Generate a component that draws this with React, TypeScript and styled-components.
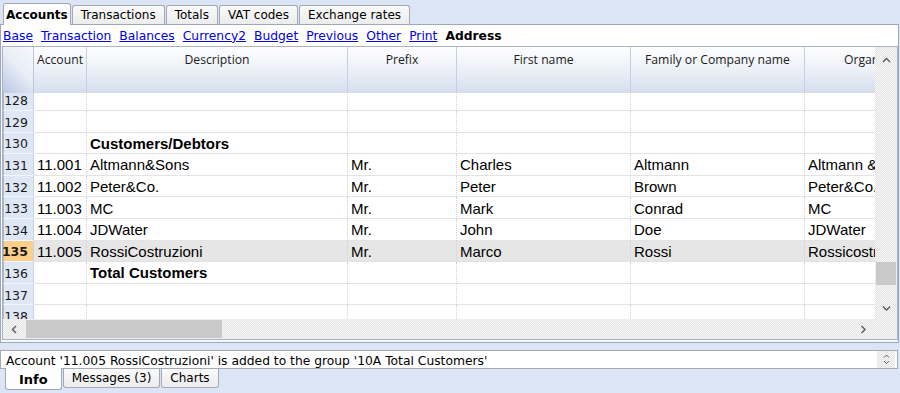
import React from "react";
import styled, {createGlobalStyle, css} from "styled-components";

const UI = `"DejaVu Sans", Tahoma, Verdana, sans-serif`;
const CELL = `"Liberation Sans", Arial, sans-serif`;
const HEAD = `"Open Sans", "Segoe UI", sans-serif`;

const COLS = "31px 53px 261px 109px 174px 174px 148px";

const GlobalStyle = createGlobalStyle`
    html, body {
        margin: 0;
        padding: 0;
    }
    body {
        width: 900px;
        height: 393px;
        overflow: hidden;
        background: #dbe5f6;
    }
`;

const checker = css`
    background-color: #efefef;
    background-image: repeating-conic-gradient(#e2e2e2 0 25%, #f8f8f8 0 50%);
    background-size: 2px 2px;
`;

interface Row {
    n: number;
    cells: string[];
    bold?: boolean;
    selected?: boolean;
}

const rows: Row[] = [
    {n: 128, cells: []},
    {n: 129, cells: []},
    {n: 130, cells: ["", "Customers/Debtors"], bold: true},
    {n: 131, cells: ["11.001", "Altmann&Sons", "Mr.", "Charles", "Altmann", "Altmann & Sons"]},
    {n: 132, cells: ["11.002", "Peter&Co.", "Mr.", "Peter", "Brown", "Peter&Co."]},
    {n: 133, cells: ["11.003", "MC", "Mr.", "Mark", "Conrad", "MC"]},
    {n: 134, cells: ["11.004", "JDWater", "Mr.", "John", "Doe", "JDWater"]},
    {n: 135, cells: ["11.005", "RossiCostruzioni", "Mr.", "Marco", "Rossi", "Rossicostruzioni"], selected: true},
    {n: 136, cells: ["", "Total Customers"], bold: true},
    {n: 137, cells: []},
    {n: 138, cells: []},
];

const headers = ["Account", "Description", "Prefix", "First name", "Family or Company name"];
const links = ["Base", "Transaction", "Balances", "Currency2", "Budget", "Previous", "Other", "Print"];

const Chevron: React.FC<{dir: "up" | "down" | "left" | "right"}> = ({dir}) => {
    const d = {
        up: "M1 5 L4.5 1.5 L8 5",
        down: "M1 1.5 L4.5 5 L8 1.5",
        left: "M5 1 L1.5 4.5 L5 8",
        right: "M1.5 1 L5 4.5 L1.5 8",
    }[dir];
    const vertical = dir === "up" || dir === "down";
    return (
        <svg width={vertical ? 9 : 7} height={vertical ? 7 : 9} viewBox={vertical ? "0 0 9 7" : "0 0 7 9"}>
            <path d={d} fill="none" stroke="#5a5a5a" strokeWidth="1.4"/>
        </svg>
    );
};

const App: React.FC = () => {
    return (
        <Window>
            <GlobalStyle/>
            <TopTabs>
                <Tab $active>Accounts</Tab>
                <Tab>Transactions</Tab>
                <Tab>Totals</Tab>
                <Tab>VAT codes</Tab>
                <Tab>Exchange rates</Tab>
            </TopTabs>

            <Panel>
                <LinkBar>
                    {links.map(l => <ViewLink key={l}>{l}</ViewLink>)}
                    <CurrentView>Address</CurrentView>
                </LinkBar>

                <Grid>
                    <GridMain>
                        <TableArea>
                            <HeaderRow>
                                <Corner/>
                                {headers.map(h => <HeaderCell key={h}>{h}</HeaderCell>)}
                                <HeaderCell $clipped>Organisation</HeaderCell>
                            </HeaderRow>
                            <Body>
                                <BodyInner>
                                    {rows.map(r => (
                                        <DataRow key={r.n}>
                                            <RowNum $selected={r.selected}>{r.n}</RowNum>
                                            {Array.from({length: 6}).map((_, i) => (
                                                <Cell key={i} $bold={r.bold} $selected={r.selected}>
                                                    {r.cells[i] ?? ""}
                                                </Cell>
                                            ))}
                                        </DataRow>
                                    ))}
                                </BodyInner>
                            </Body>
                        </TableArea>
                        <VScroll>
                            <VArrow $top><Chevron dir="up"/></VArrow>
                            <VThumb/>
                            <VArrow><Chevron dir="down"/></VArrow>
                        </VScroll>
                    </GridMain>
                    <HScrollRow>
                        <HScroll>
                            <HArrow><Chevron dir="left"/></HArrow>
                            <HThumb/>
                            <HArrow><Chevron dir="right"/></HArrow>
                        </HScroll>
                        <ScrollCorner/>
                    </HScrollRow>
                </Grid>
            </Panel>

            <MessageBox>
                <MessageText>
                    Account '11.005 RossiCostruzioni' is added to the group '10A Total Customers'
                </MessageText>
                <Spinner>
                    <Chevron dir="up"/>
                    <Chevron dir="down"/>
                </Spinner>
            </MessageBox>

            <BottomTabs>
                <Tab $active $bottom>Info</Tab>
                <Tab $bottom>Messages (3)</Tab>
                <Tab $bottom>Charts</Tab>
            </BottomTabs>
        </Window>
    );
};

const Window = styled.div`
    width: 900px;
    height: 393px;
    display: flex;
    flex-direction: column;
    background: #dbe5f6;
    font-family: ${UI};
    font-size: 12px;
    color: #000;
`;

const TopTabs = styled.div`
    height: 24px;
    display: flex;
    align-items: flex-end;
    gap: 1px;
    padding-left: 3px;
    position: relative;
    z-index: 1;
`;

const Tab = styled.div<{ $active?: boolean; $bottom?: boolean }>`
    box-sizing: border-box;
    height: ${p => p.$active ? 22 : 19}px;
    padding: 0 ${p => p.$active ? 2 : 8}px;
    display: flex;
    align-items: center;
    border: 1px solid #a3a9b4;
    border-${p => p.$bottom ? "top" : "bottom"}: none;
    border-radius: ${p => p.$bottom ? "0 0 3px 3px" : "3px 3px 0 0"};
    background: ${p => p.$active ? "#fdfdfd" : "linear-gradient(#fafafa, #ececec)"};
    font-weight: ${p => p.$active ? 700 : 400};
    font-size: 12px;
    white-space: nowrap;
    margin-${p => p.$bottom ? "top" : "bottom"}: ${p => p.$active ? -1 : 0}px;
    ${p => p.$active && p.$bottom && css`
        padding: 2px 13px 0;
        font-size: 13px;
    `}
`;

const Panel = styled.div`
    width: 899px;
    box-sizing: border-box;
    border: 1px solid #9fa8b8;
    background: #f3f6fb;
    padding-bottom: 2px;
`;

const LinkBar = styled.div`
    height: 21px;
    display: flex;
    align-items: center;
    gap: 8px;
    padding-left: 2px;
    background: #fff;
`;

const ViewLink = styled.span`
    color: #0000e6;
    text-decoration: underline;
    font-size: 12.3px;
`;

const CurrentView = styled.span`
    font-weight: 700;
    font-size: 12.3px;
`;

const Grid = styled.div`
    margin-left: 1px;
    border: 1px solid #abb4c4;
    display: flex;
    flex-direction: column;
    background: #fff;
`;

const GridMain = styled.div`
    display: flex;
    height: 272px;
`;

const TableArea = styled.div`
    width: 872px;
    overflow: hidden;
    display: flex;
    flex-direction: column;
`;

const HeaderRow = styled.div`
    display: grid;
    grid-template-columns: ${COLS};
    height: 46px;
    flex-shrink: 0;
`;

const HeaderCell = styled.div<{ $clipped?: boolean }>`
    box-sizing: border-box;
    border-right: 1px solid #c4cfe1;
    background: linear-gradient(to bottom, #fdfdfe 0%, #f4f6fa 30%, #e7ecf5 60%, #d6deed 100%);
    font-family: ${HEAD};
    font-size: 12.2px;
    color: #1c1c1c;
    text-align: ${p => p.$clipped ? "left" : "center"};
    padding-top: 4px;
    padding-left: ${p => p.$clipped ? 39 : 0}px;
    white-space: nowrap;
    overflow: hidden;
`;

const Corner = styled(HeaderCell)`
    border-right-color: #b9c6dc;
    background: linear-gradient(225deg, #f7f9fc 0%, #e9eef7 45%, #b9c8e2 100%);
`;

const Body = styled.div`
    flex: 1;
    overflow: hidden;
`;

const BodyInner = styled.div`
    margin-top: -3.6px;
`;

const DataRow = styled.div`
    display: grid;
    grid-template-columns: ${COLS};
    height: 21.6px;
`;

const RowNum = styled.div<{ $selected?: boolean }>`
    box-sizing: border-box;
    display: flex;
    align-items: center;
    justify-content: flex-end;
    padding: 2px 5px 0 0;
    border-left: 1px solid #a9b7cf;
    border-right: 1px solid #c7d2e5;
    border-bottom: 1px solid #f3f6fb;
    background: ${p => p.$selected ? "#fdcf8b" : "#dfe7f5"};
    font-family: ${UI};
    font-size: 12.5px;
    font-weight: ${p => p.$selected ? 700 : 400};
    color: #1a1a1a;
`;

const Cell = styled.div<{ $bold?: boolean; $selected?: boolean }>`
    box-sizing: border-box;
    display: flex;
    align-items: center;
    padding: 1px 3px 0 3px;
    border-right: 1px dotted #d6cfd6;
    border-bottom: 1px solid #e3e3e3;
    background: ${p => p.$selected ? "#e6e6e6" : "#fff"};
    font-family: ${CELL};
    font-size: 15px;
    font-weight: ${p => p.$bold ? 700 : 400};
    white-space: nowrap;
    overflow: hidden;
`;

const VScroll = styled.div`
    width: 22px;
    display: flex;
    flex-direction: column;
    ${checker};
`;

const VArrow = styled.div<{ $top?: boolean }>`
    height: ${p => p.$top ? 26 : 22}px;
    display: flex;
    align-items: center;
    justify-content: center;
    margin-top: ${p => p.$top ? 0 : "auto"};
`;

const VThumb = styled.div`
    margin: 189px 1px 0 1px;
    height: 23px;
    background: #c9c9c9;
`;

const HScrollRow = styled.div`
    display: flex;
    height: 20px;
`;

const HScroll = styled.div`
    width: 872px;
    display: flex;
    align-items: stretch;
    ${checker};
`;

const HArrow = styled.div`
    width: 23px;
    display: flex;
    align-items: center;
    justify-content: center;

    &:last-child {
        margin-left: auto;
    }
`;

const HThumb = styled.div`
    width: 196px;
    margin: 1px 0;
    background: #c9c9c9;
`;

const ScrollCorner = styled.div`
    flex: 1;
    ${checker};
`;

const MessageBox = styled.div`
    margin-top: 7px;
    width: 898px;
    height: 19px;
    box-sizing: border-box;
    border: 1px solid #a4a9b2;
    background: #fff;
    display: flex;
    align-items: flex-start;
    position: relative;
`;

const MessageText = styled.div`
    flex: 1;
    padding: 2px 0 0 5px;
    font-size: 12.3px;
    line-height: 16px;
    white-space: nowrap;
    overflow: hidden;
    height: 17px;
`;

const Spinner = styled.div`
    width: 18px;
    height: 100%;
    margin-right: 2px;
    display: flex;
    flex-direction: column;
    align-items: center;
    justify-content: center;
    gap: 1px;
    ${checker};

    svg {
        width: 7px;
        height: 5px;
    }
`;

const BottomTabs = styled.div`
    display: flex;
    align-items: flex-start;
    gap: 1px;
    padding-left: 5px;
    position: relative;
`;

export default App;
